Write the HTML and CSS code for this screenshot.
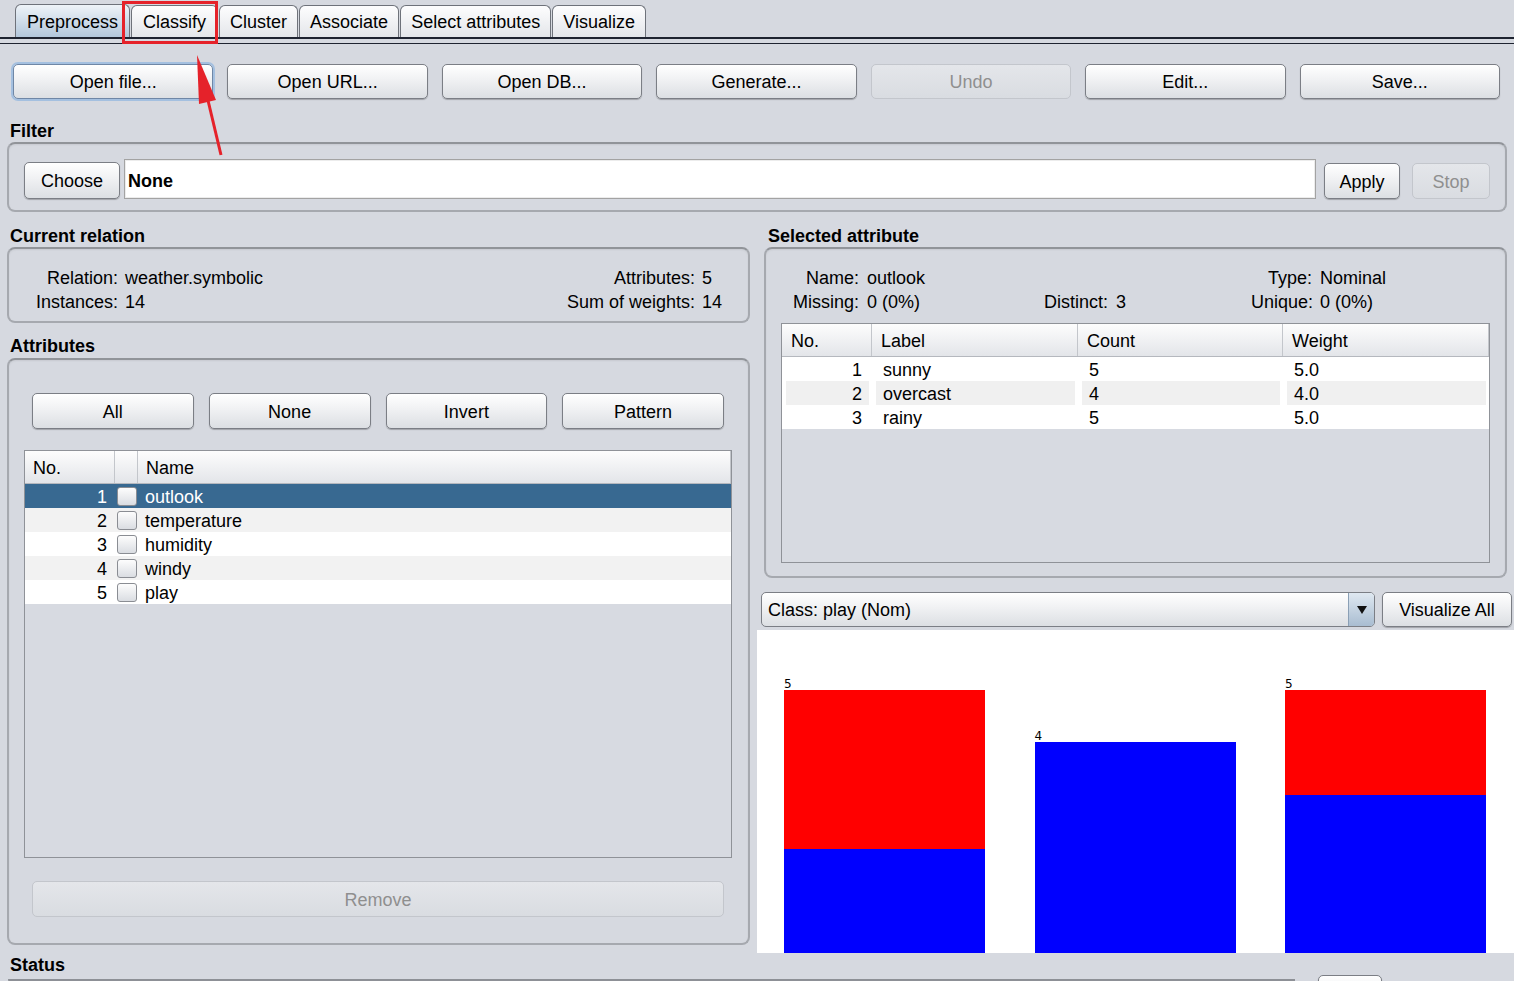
FILE: index.html
```html
<!DOCTYPE html>
<html>
<head>
<meta charset="utf-8">
<link rel="stylesheet" href="styles.css">
</head>
<body>
<div class="tabbar">
  <div class="tab active">Preprocess</div>
  <div class="tab wide">Classify</div>
  <div class="tab">Cluster</div>
  <div class="tab">Associate</div>
  <div class="tab">Select attributes</div>
  <div class="tab">Visualize</div>
</div>
<div class="tabline"></div>

<div class="toolbar">
  <div class="btn focus">Open file...</div>
  <div class="btn">Open URL...</div>
  <div class="btn">Open DB...</div>
  <div class="btn">Generate...</div>
  <div class="btn disabled">Undo</div>
  <div class="btn">Edit...</div>
  <div class="btn">Save...</div>
</div>

<div class="title t-top"><span>Filter</span></div>
<div class="panel filter">
  <div class="btn choose">Choose</div>
  <div class="field">None</div>
  <div class="btn apply">Apply</div>
  <div class="btn disabled stop">Stop</div>
</div>

<div class="main">
  <div class="col-left">
    <div class="title t-main"><span>Current relation</span></div>
    <div class="panel rel">
      <div class="lbl">Relation:</div><div class="val">weather.symbolic</div><div></div><div class="lbl">Attributes:</div><div class="val">5</div>
      <div class="lbl">Instances:</div><div class="val">14</div><div></div><div class="lbl">Sum of weights:</div><div class="val">14</div>
    </div>
    <div class="title t-attr"><span>Attributes</span></div>
    <div class="panel attrs">
      <div class="selbtns">
        <div class="btn b36">All</div>
        <div class="btn b36">None</div>
        <div class="btn b36">Invert</div>
        <div class="btn b36">Pattern</div>
      </div>
      <div class="tbl tbl-l">
        <div class="thead lrow">
          <div class="th">No.</div><div class="th"></div><div class="th">Name</div>
        </div>
        <div class="lrow row sel-row"><div class="num">1</div><div class="cbc"><div class="cb"></div></div><div class="nm">outlook</div></div>
        <div class="lrow row alt"><div class="num">2</div><div class="cbc"><div class="cb"></div></div><div class="nm">temperature</div></div>
        <div class="lrow row"><div class="num">3</div><div class="cbc"><div class="cb"></div></div><div class="nm">humidity</div></div>
        <div class="lrow row alt"><div class="num">4</div><div class="cbc"><div class="cb"></div></div><div class="nm">windy</div></div>
        <div class="lrow row"><div class="num">5</div><div class="cbc"><div class="cb"></div></div><div class="nm">play</div></div>
      </div>
      <div class="btn disabled b36 remove">Remove</div>
    </div>
  </div>

  <div class="col-right">
    <div class="title t-main t-right"><span>Selected attribute</span></div>
    <div class="panel selp">
      <div class="info">
        <div class="lbl">Name:</div><div class="val">outlook</div><div></div><div></div><div class="lbl">Type:</div><div class="val">Nominal</div>
        <div class="lbl">Missing:</div><div class="val">0 (0%)</div><div class="lbl">Distinct:</div><div class="val">3</div><div class="lbl">Unique:</div><div class="val">0 (0%)</div>
      </div>
      <div class="tbl tbl-r">
        <div class="thead rrow">
          <div class="th">No.</div><div class="th">Label</div><div class="th">Count</div><div class="th">Weight</div>
        </div>
        <div class="rrow row"><div class="c num">1</div><div class="c">sunny</div><div class="c">5</div><div class="c">5.0</div></div>
        <div class="rrow row altc"><div class="c num">2</div><div class="c">overcast</div><div class="c">4</div><div class="c">4.0</div></div>
        <div class="rrow row"><div class="c num">3</div><div class="c">rainy</div><div class="c">5</div><div class="c">5.0</div></div>
      </div>
    </div>
    <div class="classrow">
      <div class="combo">
        <div class="combo-text">Class: play (Nom)</div>
        <div class="combo-arrow"><svg width="10" height="8" viewBox="0 0 10 8"><polygon points="0,0 10,0 5,8" fill="#111"/></svg></div>
      </div>
      <div class="btn vis">Visualize All</div>
    </div>
    <div class="hist">
      <div class="bar">
        <div class="bar-label">5</div>
        <div class="seg red" style="height:159px"></div>
        <div class="seg blue" style="height:104px"></div>
      </div>
      <div class="bar">
        <div class="bar-label">4</div>
        <div class="seg blue" style="height:211px"></div>
      </div>
      <div class="bar">
        <div class="bar-label">5</div>
        <div class="seg red" style="height:105px"></div>
        <div class="seg blue" style="height:158px"></div>
      </div>
    </div>
  </div>
</div>

<div class="title t-status"><span>Status</span></div>
<div class="statusrow">
  <div class="statusbox"></div>
  <div class="btn statusbtn"></div>
</div>

<svg class="annot" width="1514" height="981" viewBox="0 0 1514 981">
  <rect x="123.5" y="2.5" width="93" height="40" fill="none" stroke="#e5222a" stroke-width="3"/>
  <line x1="221" y1="155" x2="206" y2="92" stroke="#e5222a" stroke-width="3"/>
  <polygon points="197,55 199,104 216,100" fill="#e5222a"/>
</svg>
</body>
</html>
```

FILE: styles.css
```css
* { box-sizing: border-box; }
html, body { margin: 0; height: 981px; overflow: hidden; }
body {
  position: relative;
  width: 1514px;
  background: #d6d9e0;
  font-family: "Liberation Sans", Arial, sans-serif;
  font-size: 18px;
  color: #000;
}

/* tabs */
.tabbar {
  height: 39px;
  padding: 4px 0 0 15px;
  display: flex;
  align-items: flex-end;
  gap: 1px;
  border-bottom: 2px solid #1e2330;
}
.tab {
  height: 32px;
  padding: 2px 10px 0;
  display: flex;
  align-items: center;
  border: 1px solid #6e727a;
  border-bottom: none;
  border-radius: 6px 6px 0 0;
  background: linear-gradient(#fdfdfe, #e4e6ea);
  white-space: nowrap;
}
.tab.wide { padding: 2px 11px 0; }
.tab.active {
  height: 33px;
  padding: 2px 11px 0;
  background: linear-gradient(#eef3f8, #b3c7db);
}
.tabline { margin-top: 4px; border-top: 1px solid #1e2330; }

/* buttons */
.btn {
  height: 35px;
  padding-top: 2px;
  border: 1px solid #7b7e85;
  border-radius: 5px;
  background: linear-gradient(#ffffff 0%, #f0f1f3 45%, #dcdfe3 100%);
  box-shadow: 0 1px 1px rgba(0, 0, 0, 0.25);
  display: flex;
  align-items: center;
  justify-content: center;
  white-space: nowrap;
}
.btn.focus { border-color: #6f87a6; box-shadow: 0 0 0 2px #a4c0e0; }
.btn.disabled {
  color: #8f8f8f;
  border-color: #c3c6cc;
  background: linear-gradient(#e4e6ea, #d9dce1);
  box-shadow: none;
}
.b36 { height: 36px; }

.toolbar {
  display: grid;
  grid-template-columns: repeat(7, 1fr);
  gap: 14px;
  padding: 20px 14px 0 13px;
}

/* titles */
.title {
  height: 20px;
  line-height: 20px;
  font-weight: bold;
  white-space: nowrap;
}
.t-top { margin: 22px 0 1px 10px; }
.t-main { margin: 14px 0 1px 3px; }
.t-right { margin-left: 11px; }
.t-attr { margin: 13px 0 2px 3px; }
.t-status { margin: 2px 0 0 10px; }

/* panels */
.panel {
  border: 2px solid #a6a9af;
  border-top-color: #919499;
  border-radius: 8px;
  box-shadow: inset 0 1px 2px rgba(0, 0, 0, 0.07);
}

.filter {
  margin: 0 7px;
  height: 70px;
  padding: 15px 15px 11px;
  display: flex;
  align-items: flex-end;
}
.choose { width: 96px; height: 37px; }
.field {
  flex: 1;
  height: 40px;
  margin: 0 8px 0 4px;
  background: #fff;
  border: 1px solid #a3a3a3;
  box-shadow: inset 0 0 0 1px #ececec;
  display: flex;
  align-items: center;
  padding: 5px 0 0 3px;
  font-weight: bold;
}
.apply { width: 76px; height: 36px; margin-right: 12px; }
.stop { width: 78px; height: 36px; }

/* main columns */
.main { display: flex; gap: 7px; padding-left: 7px; }
.col-left { width: 743px; }
.col-right { flex: 1; }

.rel {
  height: 76px;
  padding: 17px 27px 7px 0;
  display: grid;
  grid-template-columns: 109px auto 1fr auto 26px;
  grid-auto-rows: 24px;
  align-items: center;
}
.lbl { text-align: right; white-space: nowrap; }
.val { padding-left: 7px; white-space: nowrap; }

.attrs {
  height: 587px;
  padding: 33px 16px 0 15px;
}
.selbtns {
  display: grid;
  grid-template-columns: repeat(4, 1fr);
  gap: 15px;
  margin: 0 8px;
}

/* tables */
.tbl {
  border: 1px solid #8f9298;
  background: #d7dae1;
  overflow: hidden;
}
.thead {
  height: 33px;
  background: linear-gradient(#fdfdfd, #e3e5e9);
  border-bottom: 1px solid #b5b8be;
}
.th {
  display: flex;
  align-items: center;
  padding: 2px 0 0 8px;
  border-right: 1px solid #c3c6cb;
  height: 100%;
}
.row { height: 24px; background: #fff; }
.row > div { display: flex; align-items: center; padding-top: 2px; }

.tbl-l { margin-top: 21px; height: 408px; }
.lrow { display: grid; grid-template-columns: 90px 23px 1fr; }
.tbl-l .row { background: #fff; }
.tbl-l .row.alt { background: #f2f2f2; }
.tbl-l .row.sel-row { background: #386991; color: #fff; }
.row > .num { justify-content: flex-end; padding-right: 8px; }
.row > .cbc { justify-content: flex-start; padding: 0 0 0 2px; }
.cb {
  width: 20px;
  height: 19px;
  border: 1px solid #8a8d93;
  border-radius: 3px;
  background: linear-gradient(#fdfdfd, #dadde2);
}
.row > .nm { padding-left: 7px; }
.remove { margin: 23px 8px 0; }

/* selected attribute */
.selp {
  margin: 0 7px;
  height: 331px;
  padding: 17px 15px 0;
}
.info {
  display: grid;
  grid-template-columns: 78px 185px 64px 143px 61px 1fr;
  grid-auto-rows: 24px;
  align-items: center;
}
.info .val { padding-left: 8px; }
.tbl-r { margin-top: 9px; height: 240px; }
.rrow { display: grid; grid-template-columns: 90px 206px 205px 1fr; }
.tbl-r .th { padding-left: 9px; }
.tbl-r .row { background: #fff; }
.tbl-r .row .c { margin: 0 3px 0 4px; padding-left: 7px; }
.tbl-r .row .c.num { justify-content: flex-end; padding-left: 0; padding-right: 7px; }
.tbl-r .row.altc .c { background: #f0f0f0; }

/* class row */
.classrow {
  display: flex;
  gap: 7px;
  margin: 14px 2px 0 4px;
  height: 35px;
}
.combo {
  flex: 1;
  display: flex;
  border: 1px solid #7b7e85;
  border-radius: 5px;
  overflow: hidden;
  background: linear-gradient(#ffffff 0%, #f0f1f3 45%, #dcdfe3 100%);
}
.combo-text { flex: 1; display: flex; align-items: center; padding: 2px 0 0 6px; }
.combo-arrow {
  width: 26px;
  border-left: 1px solid #8a9fb5;
  background: linear-gradient(#dfe8f1, #a9bdd1);
  display: flex;
  align-items: center;
  justify-content: center;
}
.vis { width: 130px; }

/* histogram */
.hist {
  margin-top: 3px;
  height: 323px;
  background: #fff;
  display: flex;
  justify-content: space-between;
  align-items: flex-end;
  padding: 0 28px 0 27px;
}
.bar { width: 201px; display: flex; flex-direction: column; }
.bar-label {
  font-family: "DejaVu Sans", sans-serif;
  font-size: 12px;
  line-height: 12px;
  height: 12px;
}
.seg.red { background: #ff0000; }
.seg.blue { background: #0000ff; }

/* status */
.statusrow { display: flex; align-items: flex-start; }
.statusbox {
  width: 1287px;
  margin: 4px 0 0 8px;
  height: 20px;
  border-top: 3px solid #8d9096;
  border-left: 1px solid #a8abb0;
}
.statusbtn { width: 64px; height: 30px; margin-left: 23px; }

.annot { position: absolute; left: 0; top: 0; pointer-events: none; }
```
